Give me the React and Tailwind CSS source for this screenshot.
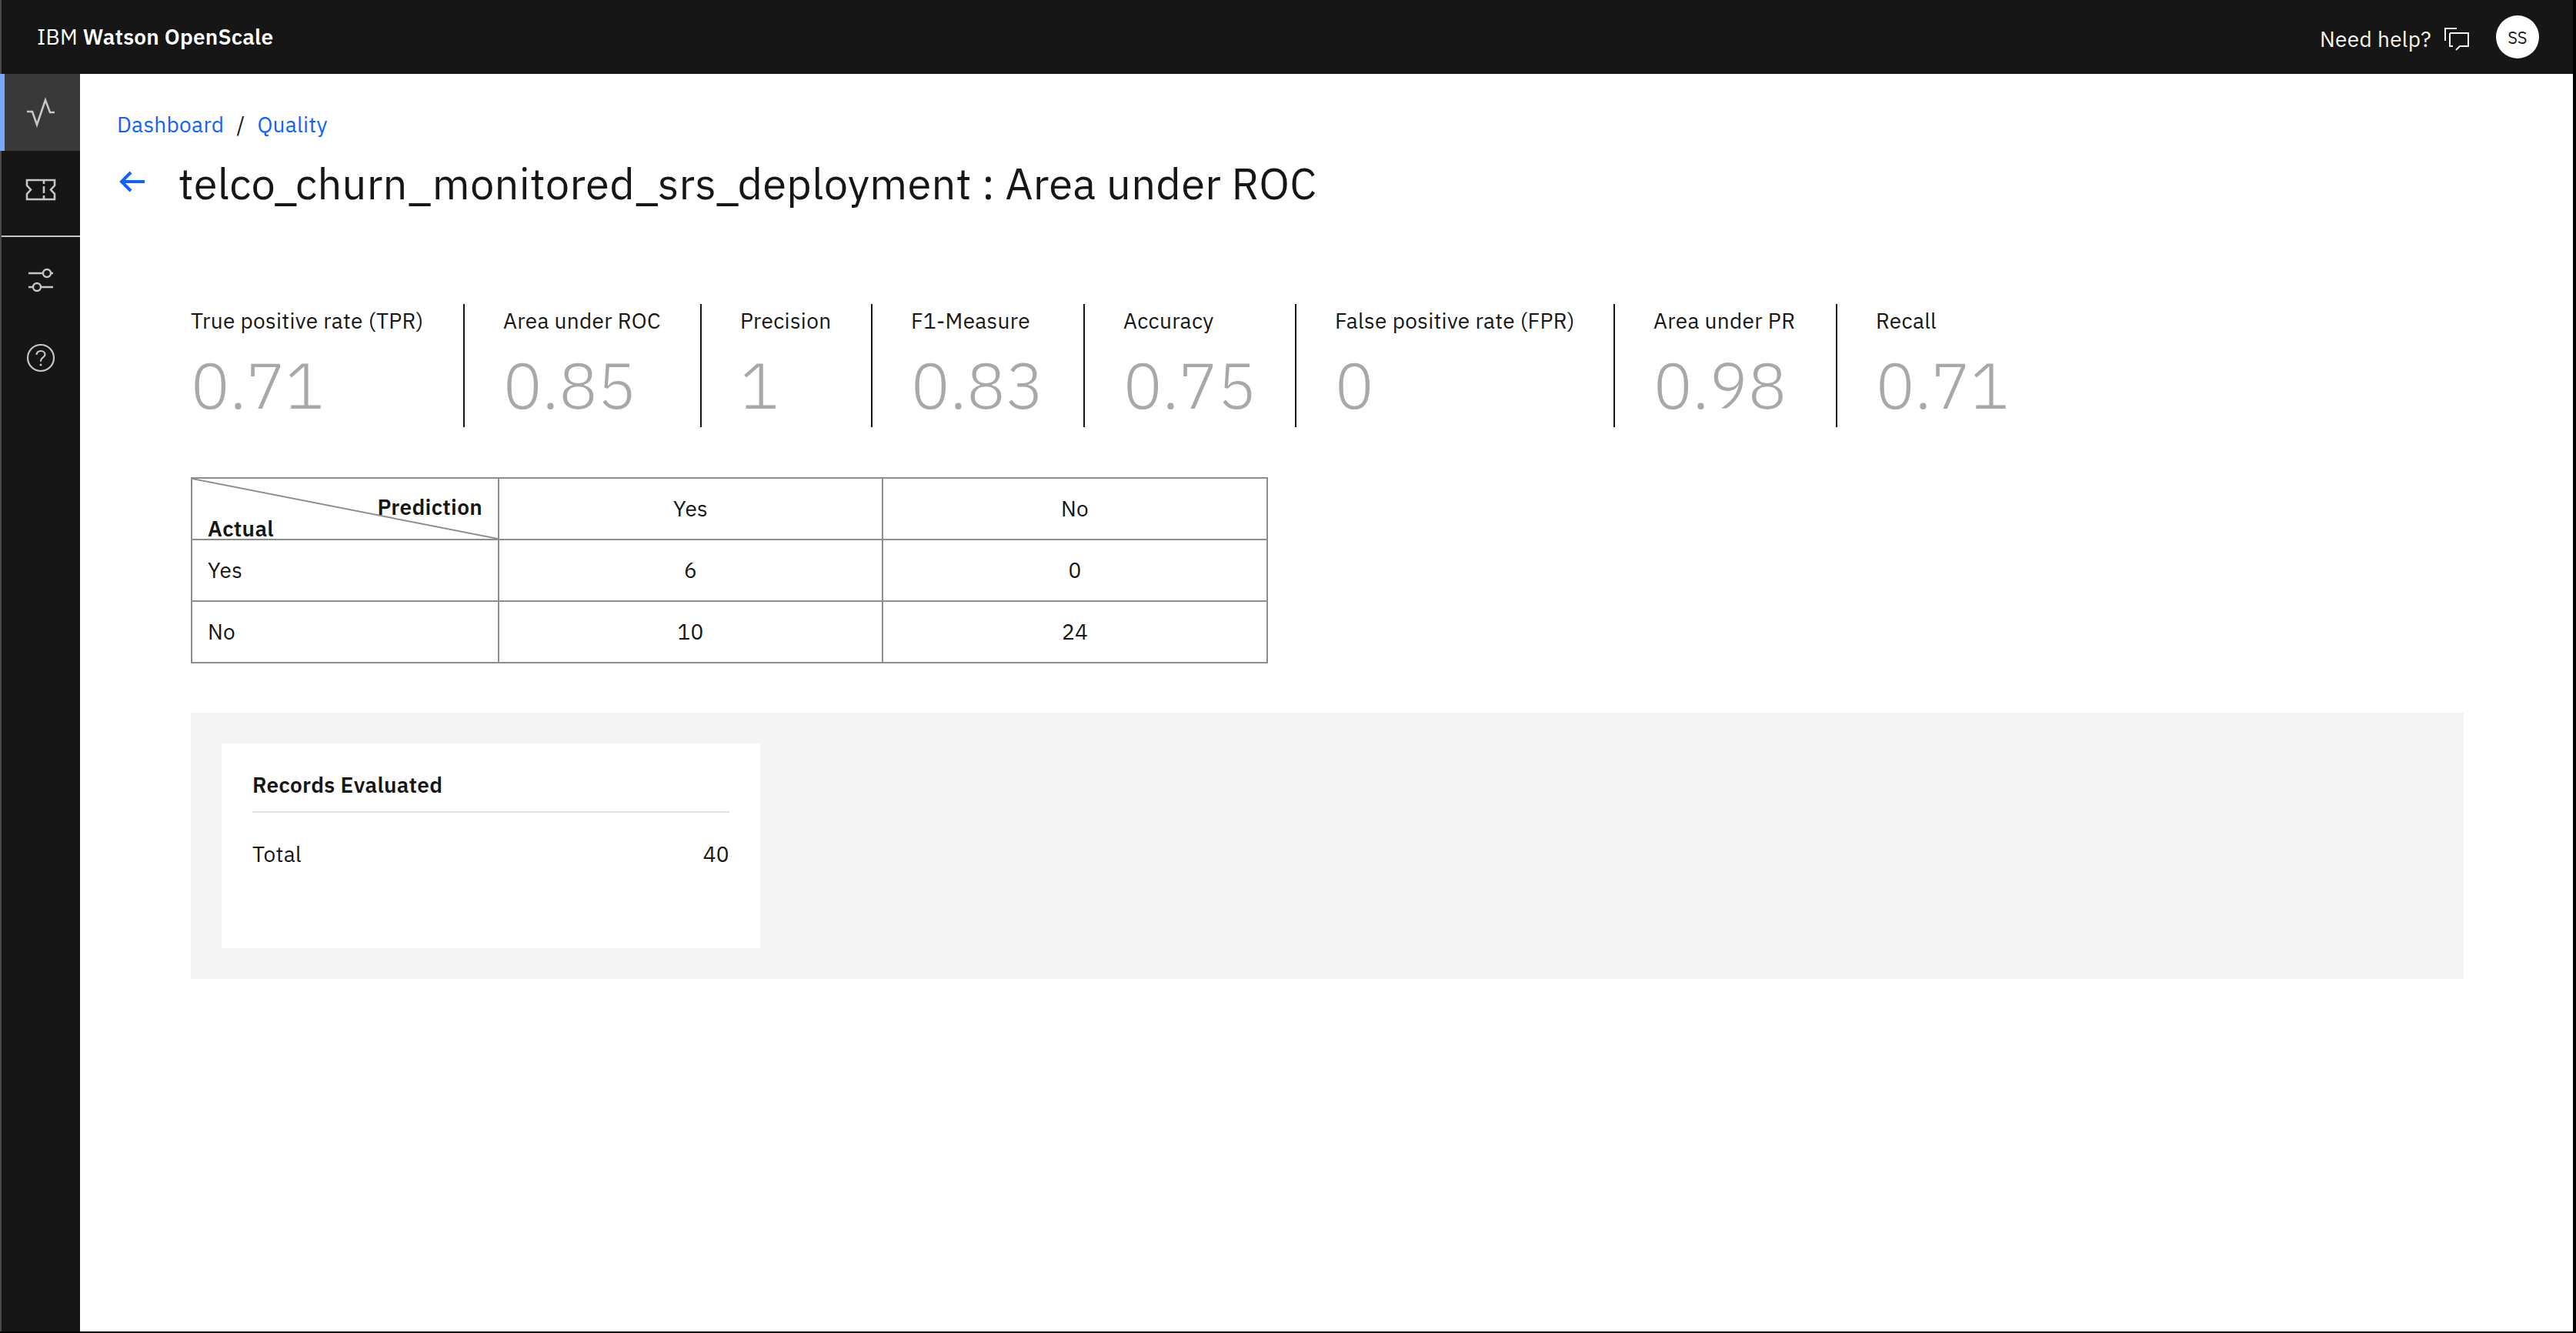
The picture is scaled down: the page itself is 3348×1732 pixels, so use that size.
const metrics = [
  { label: "True positive rate (TPR)", value: "0.71", box: "w-[356px]" },
  { label: "Area under ROC", value: "0.85", box: "w-[308px] pl-[50px]" },
  { label: "Precision", value: "1", box: "w-[222px] pl-[50px]" },
  { label: "F1-Measure", value: "0.83", box: "w-[276px] pl-[50px]" },
  { label: "Accuracy", value: "0.75", box: "w-[275px] pl-[50px]" },
  { label: "False positive rate (FPR)", value: "0", box: "w-[414px] pl-[50px]" },
  { label: "Area under PR", value: "0.98", box: "w-[289px] pl-[50px]" },
  { label: "Recall", value: "0.71", box: "w-[300px] pl-[50px]", last: true },
];

const rows = [
  ["Yes", "6", "0"],
  ["No", "10", "24"],
];

const ActivityIcon = () => (
  <svg width="40" height="40" viewBox="0 0 40 40" fill="none" stroke="#c6c6c6" strokeWidth="2.6">
    <path d="M2 19h7l6 17L26 4l6 16h6" />
  </svg>
);

const TicketIcon = () => (
  <svg width="40" height="40" viewBox="0 0 40 40" fill="none" stroke="#c6c6c6" strokeWidth="2.6">
    <path d="M2 8h36v7l-5 5.500 5 5.500v7H2v-7l5-5.500-5-5.500z" />
    <path d="M24 8v5M24 16v9M24 28v5" />
  </svg>
);

const SlidersIcon = () => (
  <svg width="40" height="40" viewBox="0 0 40 40" fill="none" stroke="#c6c6c6" strokeWidth="2.4">
    <path d="M4 11h19M33 11h3M4 29h6M20 29h16" />
    <circle cx="28" cy="11" r="5" />
    <circle cx="15" cy="29" r="5" />
  </svg>
);

const HelpIcon = () => (
  <svg width="40" height="40" viewBox="0 0 40 40" fill="none" stroke="#c6c6c6" strokeWidth="2.2">
    <circle cx="20" cy="20" r="17" />
    <path d="M14.500 16c0-3.200 2.400-5 5.500-5s5.500 1.800 5.500 4.800c0 3.600-5.500 3.600-5.500 8v1" />
    <circle cx="20" cy="29" r="1.500" fill="#c6c6c6" stroke="none" />
  </svg>
);

const ChatIcon = () => (
  <svg width="34" height="32" viewBox="0 0 34 32" fill="none" stroke="#f4f4f4" strokeWidth="2">
    <path d="M2 18V2h15" />
    <path d="M8 8h24v17H21l-5 5M12 25H8V8" />
  </svg>
);

const BackArrow = () => (
  <svg width="36" height="28" viewBox="0 0 36 28" fill="none" stroke="#0f62fe" strokeWidth="4">
    <path d="M34 14H5M16 2L4 14l12 12" />
  </svg>
);

function SideItem({ active, children }) {
  return (
    <div
      className={
        active
          ? "h-[100px] -ml-[2px] flex items-center justify-center bg-[#393939] border-l-[6px] border-[#78a9ff] pr-[4px]"
          : "h-[100px] flex items-center justify-center"
      }
    >
      {children}
    </div>
  );
}

function Metric({ label, value, box, last }) {
  return (
    <div className={`h-[160px] shrink-0 ${box} ${last ? "" : "border-r-2 border-[#161616]"}`}>
      <div className="pt-[2px] text-[28px] leading-[40px] tracking-[0.32px] text-[#161616] whitespace-nowrap">{label}</div>
      <div className="mt-[13px] text-[84px] leading-[100px] font-light text-[#a8a8a8]">{value}</div>
    </div>
  );
}

export default function App() {
  return (
    <div className="w-[3348px] h-[1732px] bg-black pr-[4px] pb-[2px] font-['IBM_Plex_Sans','Noto_Sans',sans-serif] overflow-hidden">
      <div className="h-full flex flex-col bg-white border-l-2 border-[#4a4a4a]">
        <header className="h-[96px] shrink-0 bg-[#161616] flex items-center justify-between pl-[46px] pr-[44px] text-white">
          <div className="text-[28px] tracking-[0.2px]">
            IBM <span className="font-semibold">Watson OpenScale</span>
          </div>
          <div className="flex items-center">
            <span className="pt-[6px] text-[28px] tracking-[0.32px] text-[#f4f4f4]">Need help?</span>
            <span className="ml-[16px] mr-[2px] mt-[6px] flex">
              <ChatIcon />
            </span>
            <span className="ml-[32px] w-[56px] h-[56px] rounded-full bg-white text-[#161616] text-[22px] flex items-center justify-center">
              SS
            </span>
          </div>
        </header>
        <div className="flex flex-1">
          <aside className="w-[102px] shrink-0 bg-[#161616]">
            <SideItem active>
              <ActivityIcon />
            </SideItem>
            <SideItem>
              <TicketIcon />
            </SideItem>
            <div className="mt-[10px] h-[2px] bg-[#c6c6c6]" />
            <div className="pt-[6px]">
              <SideItem>
                <SlidersIcon />
              </SideItem>
            </div>
            <div className="pt-[1px]">
              <SideItem>
                <HelpIcon />
              </SideItem>
            </div>
          </aside>
          <main className="flex-1 pl-[48px] pt-[46px]">
            <nav className="flex items-center text-[28px] leading-[40px] tracking-[0.32px] text-[#0f62fe]">
              <span>Dashboard</span>
              <span className="mx-[16px] text-[#161616]">/</span>
              <span>Quality</span>
            </nav>
            <div className="mt-[20px] flex items-center">
              <span className="ml-[2px] mb-[4px] flex">
                <BackArrow />
              </span>
              <h1 className="ml-[42px] text-[56px] leading-[72px] tracking-[0.32px] font-normal text-[#161616] whitespace-nowrap">
                telco_churn_monitored_srs_deployment : Area under ROC
              </h1>
            </div>
            <div className="ml-[96px] mr-[142px]">
              <div className="mt-[121px] flex">
                {metrics.map((m) => (
                  <Metric key={m.label} {...m} />
                ))}
              </div>
              <table className="mt-[65px] w-[1398px] border-collapse border-2 border-[#8d8d8d] text-[28px] tracking-[0.32px] text-[#161616] table-fixed">
                <colgroup>
                  <col className="w-[399px]" />
                  <col className="w-[499px]" />
                  <col className="w-[500px]" />
                </colgroup>
                <tbody>
                  <tr className="h-[80px]">
                    <td className="relative border-2 border-[#8d8d8d] p-0">
                      <svg className="absolute inset-0 w-full h-full" viewBox="0 0 400 80" preserveAspectRatio="none">
                        <line x1="0" y1="0" x2="400" y2="80" stroke="#8d8d8d" strokeWidth="2" />
                      </svg>
                      <div className="relative font-semibold leading-[34px] px-[20px] h-[78px] pt-[20px]">
                        <div className="text-right h-[24px] leading-[34px]">Prediction</div>
                        <div className="leading-[34px] mt-[4px]">Actual</div>
                      </div>
                    </td>
                    <td className="border-2 border-[#8d8d8d] text-center">Yes</td>
                    <td className="border-2 border-[#8d8d8d] text-center">No</td>
                  </tr>
                  {rows.map((r) => (
                    <tr key={r[0]} className="h-[80px]">
                      <td className="border-2 border-[#8d8d8d] px-[20px]">{r[0]}</td>
                      <td className="border-2 border-[#8d8d8d] text-center">{r[1]}</td>
                      <td className="border-2 border-[#8d8d8d] text-center">{r[2]}</td>
                    </tr>
                  ))}
                </tbody>
              </table>
              <section className="mt-[64px] h-[346px] bg-[#f4f4f4] p-[40px]">
                <div className="w-[700px] h-[266px] bg-white px-[40px] pt-[36px]">
                  <div className="text-[28px] leading-[36px] tracking-[0.32px] font-semibold text-[#161616]">Records Evaluated</div>
                  <div className="mt-[16px] h-[2px] bg-[#e0e0e0]" />
                  <div className="mt-[36px] flex justify-between text-[28px] leading-[36px] tracking-[0.32px] text-[#161616]">
                    <span>Total</span>
                    <span>40</span>
                  </div>
                </div>
              </section>
            </div>
          </main>
        </div>
      </div>
    </div>
  );
}
